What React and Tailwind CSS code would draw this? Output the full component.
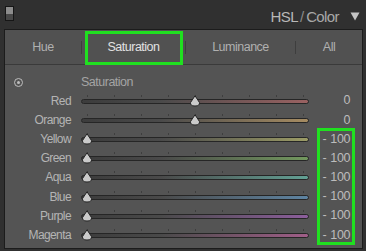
import React from "react";

const rows = [
  { name: "Red", value: 0, color: "#9a6262" },
  { name: "Orange", value: 0, color: "#a68c62" },
  { name: "Yellow", value: -100, color: "#9c9c66" },
  { name: "Green", value: -100, color: "#72985e" },
  { name: "Aqua", value: -100, color: "#62a094" },
  { name: "Blue", value: -100, color: "#5e84a2" },
  { name: "Purple", value: -100, color: "#8c5e9c" },
  { name: "Magenta", value: -100, color: "#a05e88" },
];

const ticks = [0, 1, 2, 3, 4, 5, 6, 7, 8];

function Thumb({ value }) {
  // slider range: offset 6px (-100) to 222px (+100)
  const center = 114 + (value / 100) * 108;
  return (
    <svg
      width="12"
      height="12"
      viewBox="0 0 12 12"
      className="absolute top-1/2 -translate-y-1/2"
      style={{ left: center - 6 }}
    >
      <path
        d="M6 0.8 L10.4 7.4 Q11.2 11 6 11 Q0.8 11 1.6 7.4 Z"
        fill="#cacaca"
        stroke="#242424"
        strokeWidth="1"
      />
    </svg>
  );
}

function SliderRow({ row }) {
  return (
    <div className="flex items-center h-[19.2px]">
      <div className="w-[66px] text-right text-[12px] tracking-[-0.6px] text-[#b4b4b4] leading-none">{row.name}</div>
      <div className="ml-[10px] w-[228px] h-full relative flex items-center">
        <div className="absolute left-0 top-1/2 w-full h-[2px] -translate-y-[6px]">
          {ticks.map((i) => (
            <div
              key={i}
              className="absolute top-0 w-px h-[2px] bg-[#3e3e3e]"
              style={{ left: 6 + i * 27 }}
            />
          ))}
        </div>
        <div
          className="w-full h-[5px] mt-[1px] rounded-full border border-[#262626]"
          style={{ background: `linear-gradient(to right, #3c3c3c, #4a4a4a 35%, ${row.color})` }}
        />
        <Thumb value={row.value} />
      </div>
      <div className="w-[41px] flex justify-end items-center gap-[4px] text-[12.5px] tracking-[-0.4px] text-[#bcbcbc] leading-none">
        {row.value === 0 ? (
          <span>0</span>
        ) : (
          <>
            <span>-</span>
            <span>100</span>
          </>
        )}
      </div>
    </div>
  );
}

export default function App() {
  return (
    <div className="w-[366px] h-[251px] bg-[#303030] relative overflow-hidden font-['Liberation_Sans',Arial,sans-serif]">
      <div className="h-[29px] flex items-start justify-between">
        <div className="ml-[5px] mt-[6px] w-[9px] h-[15px] border border-[#161616] flex flex-col">
          <div className="flex-1 bg-[#8c8c8c]" />
          <div className="flex-1 bg-[#484848]" />
        </div>
        <div className="flex items-center mt-[9px] mr-[6px] text-[15px] leading-none">
          <span className="text-[#b8b8b8] tracking-[-0.6px]">HSL</span>
          <span className="text-[#8a8a8a] mx-[2px]">/</span>
          <span className="text-[#a8a8a8] tracking-[-0.6px]">Color</span>
          <svg width="10" height="9" viewBox="0 0 10 9" className="ml-[11px]">
            <path d="M0.5 0.5 L9.5 0.5 L5 8.5 Z" fill="#c4c4c4" />
          </svg>
        </div>
      </div>

      <div className="ml-[4px] w-[359px] h-[220px] border border-[#1c1c1c] bg-[#545454]">
        <div className="h-[35px] flex items-center border-b border-[#3a3a3a] bg-[#515151] text-[12.5px] tracking-[-0.5px]">
          <div className="w-[76px] text-center text-[#b0b0b0]">Hue</div>
          <div className="w-px h-[13px] bg-[#3e3e3e]" />
          <div className="w-[103px] text-center text-[#e2e2e2]">Saturation</div>
          <div className="w-px h-[13px] bg-[#3e3e3e]" />
          <div className="w-[109px] text-center text-[#b0b0b0]">Luminance</div>
          <div className="w-px h-[13px] bg-[#3e3e3e]" />
          <div className="flex-1 text-center text-[#b0b0b0]">All</div>
        </div>

        <div className="h-[26px] pt-[9px] flex items-center">
          <div className="ml-[9px] w-[9px] h-[9px] rounded-full border border-[#bdbdbd] flex items-center justify-center">
            <div className="w-[3px] h-[3px] rounded-full bg-[#bdbdbd]" />
          </div>
          <div className="ml-[58px] text-[12.5px] tracking-[-0.5px] text-[#a4a4a4] leading-none">Saturation</div>
        </div>

        {rows.map((row) => (
          <SliderRow key={row.name} row={row} />
        ))}
      </div>

      <div className="absolute left-[85px] top-[31px] w-[98px] h-[34px] border-[3px] border-[#20e020]" />
      <div className="absolute left-[317px] top-[128px] w-[38px] h-[117px] border-[3px] border-[#20e020]" />
    </div>
  );
}
